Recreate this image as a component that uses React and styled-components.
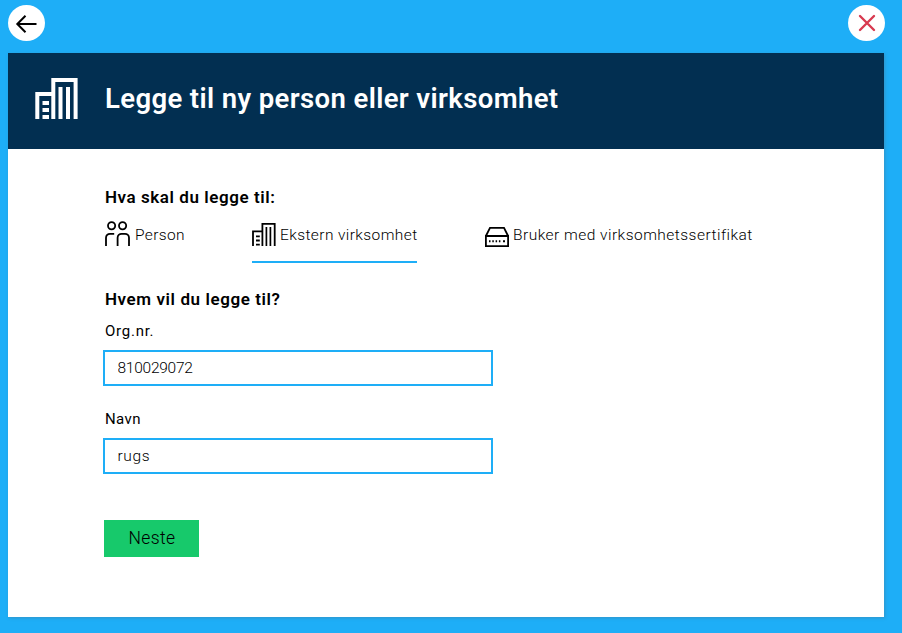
import React from "react";
import styled, { createGlobalStyle } from "styled-components";

const GlobalStyle = createGlobalStyle`
  * { box-sizing: border-box; }
  body {
    margin: 0;
    background: #1eaef7;
    color: #000;
    font-family: Roboto, "Liberation Sans", sans-serif;
  }
`;

const Page = styled.main`
  width: 902px;
  height: 633px;
  padding: 5px 18px 16px 8px;
  display: flex;
  flex-direction: column;
  overflow: hidden;
`;

const TopBar = styled.div`
  display: flex;
  justify-content: space-between;
  height: 48px;
  margin-right: -1px;
`;

const RoundButton = styled.button`
  width: 37px;
  height: 36px;
  padding: 0;
  border: 0;
  border-radius: 50%;
  background: #fff;
  display: flex;
  svg { display: block; }
`;

const Card = styled.section`
  flex: 1;
  background: #fff;
  box-shadow: 1px 1px 3px rgba(80, 110, 130, 0.4);
`;

const CardHeader = styled.header`
  height: 96px;
  padding: 25px 0 0 27px;
  background: #022f51;
  color: #fff;
  display: flex;
  align-items: flex-start;
`;

const Title = styled.h1`
  margin: 3px 0 0 27px;
  font-size: 27.5px;
  line-height: 36px;
  font-weight: 600;
  letter-spacing: ${(p) => p.$spacing}px;
  white-space: nowrap;
`;

const Content = styled.div`
  padding: 37px 0 0 97px;
`;

const Heading = styled.h2`
  margin: 0;
  font-size: 17px;
  line-height: 22px;
  font-weight: 600;
  letter-spacing: ${(p) => p.$spacing}px;
`;

const Tabs = styled.div`
  display: flex;
  height: 55px;
  margin-bottom: 25px;
`;

const Tab = styled.div`
  display: flex;
  align-items: flex-start;
  width: ${(p) => p.$width}px;
  margin-right: ${(p) => p.$gap || 0}px;
  padding-top: 13px;
  border-bottom: 2px solid ${(p) => (p.$active ? "#1eaef7" : "transparent")};
  svg { display: block; flex: none; }
`;

const TabLabel = styled.span`
  margin-left: ${(p) => p.$offset}px;
  font-size: 15.5px;
  line-height: 28px;
  font-weight: 300;
  letter-spacing: ${(p) => p.$spacing}px;
  white-space: nowrap;
`;

const Field = styled.label`
  display: block;
  height: 88px;
`;

const FieldLabel = styled.span`
  display: block;
  padding-top: 10px;
  height: 40px;
  font-size: 15px;
  line-height: 22px;
  letter-spacing: ${(p) => p.$spacing}px;
`;

const Input = styled.input`
  display: block;
  width: 390px;
  height: 36px;
  margin-left: -2px;
  padding: 0 12.5px;
  border: 2px solid #1eaef7;
  border-radius: 0;
  outline: 0;
  background: #fff;
  color: #000;
  font: 300 15.5px Roboto, "Liberation Sans", sans-serif;
  letter-spacing: ${(p) => p.$spacing}px;
`;

const NextButton = styled.button`
  display: block;
  width: 95px;
  height: 37px;
  margin: 34px 0 0 -1px;
  padding: 0 0 1px 1px;
  border: 0;
  background: #17c96b;
  color: #000;
  font: 300 17.5px Roboto, "Liberation Sans", sans-serif;
  letter-spacing: 0.4px;
`;

const ArrowIcon = () => (
  <svg width="37" height="36" fill="none" stroke="#000" strokeWidth="2">
    <path d="M28.5 19H9.5M17.5 10.7L9.3 19l8.2 8.3" />
  </svg>
);

const CloseIcon = () => (
  <svg width="37" height="36" fill="none" stroke="#d83a50" strokeWidth="2.4" strokeLinecap="round">
    <path d="M12 11l14 14M26 11L12 25" />
  </svg>
);

const LargeBuilding = () => (
  <svg width="43" height="41" fill="none" stroke="#fff" strokeWidth="4">
    <path d="M2.3 41V16h16M18.3 41V2h22.3v39M25.5 9v32M33 9v32" />
    <path d="M7.5 25h6.5M7.5 32h6.5M7.5 39h6.5" />
  </svg>
);

const SmallBuilding = () => (
  <svg width="24" height="26" fill="none" stroke="#000" strokeWidth="1.8">
    <path d="M1 25V10.4h9M10.4 25V2.9h12.3V25" />
    <path strokeWidth="1.7" d="M14.4 6v19M18.4 6v19" />
    <path strokeWidth="1.8" d="M4 15.4h3.8M4 19.5h3.8M4 23.6h3.8" />
  </svg>
);

const PeopleIcon = () => (
  <svg width="26" height="26" fill="none" stroke="#000" strokeWidth="1.8">
    <circle cx="6.6" cy="4.8" r="3.6" />
    <circle cx="17.6" cy="4.8" r="3.6" />
    <path d="M1 25v-8.2a4 4 0 0 1 4-4h4.2M12.6 25v-8.2a4 4 0 0 1 4-4h3.4a4 4 0 0 1 4 4V25" />
  </svg>
);

const ServerIcon = () => (
  <svg width="24" height="26" fill="none" stroke="#000" strokeWidth="1.8">
    <path d="M.9 15v10.1h22.2V15zM.9 15L5 6.8h14L23.1 15" />
    <path strokeWidth="2" d="M4 20.3h1.5M7.3 20.3h1.5M10.6 20.3h1.5M13.9 20.3h1.5M18 20.3h2" />
  </svg>
);

export default function App() {
  return (
    <>
      <GlobalStyle />
      <Page>
        <TopBar>
          <RoundButton aria-label="Tilbake"><ArrowIcon /></RoundButton>
          <RoundButton aria-label="Lukk"><CloseIcon /></RoundButton>
        </TopBar>
        <Card>
          <CardHeader>
            <LargeBuilding />
            <Title $spacing={0.38}>Legge til ny person eller virksomhet</Title>
          </CardHeader>
          <Content>
            <Heading $spacing={0.56}>Hva skal du legge til:</Heading>
            <Tabs>
              <Tab $width={80} $gap={67}>
                <PeopleIcon />
                <TabLabel $offset={4} $spacing={0.35}>Person</TabLabel>
              </Tab>
              <Tab $width={165} $gap={68} $active>
                <SmallBuilding />
                <TabLabel $offset={4} $spacing={0.4}>Ekstern virksomhet</TabLabel>
              </Tab>
              <Tab $width={270}>
                <ServerIcon />
                <TabLabel $offset={4} $spacing={0.47}>Bruker med virksomhetssertifikat</TabLabel>
              </Tab>
            </Tabs>
            <Heading $spacing={0.58}>Hvem vil du legge til?</Heading>
            <Field>
              <FieldLabel $spacing={0.75}>Org.nr.</FieldLabel>
              <Input $spacing={-0.25} defaultValue="810029072" />
            </Field>
            <Field>
              <FieldLabel $spacing={0.4}>Navn</FieldLabel>
              <Input $spacing={0.6} defaultValue="rugs" />
            </Field>
            <NextButton>Neste</NextButton>
          </Content>
        </Card>
      </Page>
    </>
  );
}
